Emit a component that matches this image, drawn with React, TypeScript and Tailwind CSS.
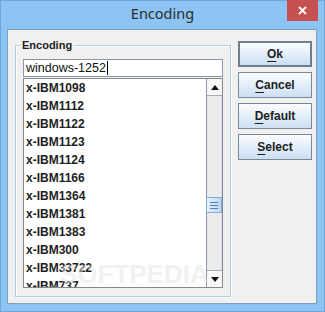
import React from 'react';

const items = [
  'x-IBM1098',
  'x-IBM1112',
  'x-IBM1122',
  'x-IBM1123',
  'x-IBM1124',
  'x-IBM1166',
  'x-IBM1364',
  'x-IBM1381',
  'x-IBM1383',
  'x-IBM300',
  'x-IBM33722',
  'x-IBM737',
];

const buttons = [
  { key: 'O', rest: 'k', def: true },
  { key: 'C', rest: 'ancel' },
  { key: 'D', rest: 'efault' },
  { key: 'S', rest: 'elect' },
];

const Arrow = ({ up }: { up?: boolean }) => (
  <svg width="8" height="5" viewBox="0 0 8 5">
    {up ? <path d="M0 5 L4 0 L8 5 Z" fill="#111" /> : <path d="M0 0 L8 0 L4 5 Z" fill="#111" />}
  </svg>
);

const App = () => {
  return (
    <div className="w-[325px] h-[312px] bg-[#8cc4f4] border border-[#6ea6dc] flex flex-col font-['Liberation_Sans',Arial,sans-serif]">
      {/* title bar */}
      <div className="relative h-[28px] flex items-center justify-center">
        <span className="font-['Noto_Sans',sans-serif] text-[14.5px] text-[#2b2b2b] -mt-[2px]">Encoding</span>
        <div className="absolute right-[6px] -top-px w-[31px] h-[21px] bg-[#c75050] flex items-center justify-center">
          <svg width="9" height="9" viewBox="0 0 9 9">
            <path d="M1 1 L8 8 M8 1 L1 8" stroke="#fff" strokeWidth="1.8" />
          </svg>
        </div>
      </div>

      {/* client area */}
      <div className="ml-[6px] w-[310px] h-[275px] border border-[#7f9fc0] bg-[#f0f0f0] flex items-start pl-[7px] pt-[11px] gap-[7px]">
        {/* group box */}
        <div className="relative mt-[4px] w-[216px] h-[252px] border border-[#b5cde5] shadow-[inset_1px_1px_0_#fff,1px_1px_0_#fff] pt-[13px] px-[7px]">
          <span className="absolute left-[4px] -top-[8px] bg-[#f0f0f0] px-[2px] text-[11px] leading-[14px] font-bold text-[#1e1e1e]">
            Encoding
          </span>
          {/* text field */}
          <div className="h-[18px] w-[200px] border border-[#8a96a3] bg-white flex items-center pl-[2px]">
            <span className="text-[12.5px] leading-none text-[#111]">windows-1252</span>
            <span className="ml-px w-px h-[14px] bg-black" />
          </div>
          {/* list */}
          <div className="relative mt-[1px] w-[200px] h-[210px] border border-[#828790] bg-white flex overflow-hidden">
            <div className="flex-1 flex flex-col">
              {items.map((it) => (
                <div key={it} className="h-[18px] shrink-0 pl-[2px] flex items-center text-[12px] font-bold text-[#1e1e1e]">
                  {it}
                </div>
              ))}
            </div>
            {/* scrollbar */}
            <div className="w-[16px] h-full border-l border-[#8a96a3] bg-[#ececec] flex flex-col">
              <div className="h-[17px] bg-[#f7f7f7] border-b border-[#a7b0ba] flex items-center justify-center">
                <Arrow up />
              </div>
              <div className="flex-1 flex flex-col border-r border-[#d9dfe6]">
                <div className="h-[101px]" />
                <div className="h-[16px] mx-[-1px] bg-gradient-to-r from-[#e6f0fb] via-[#d4e5f8] to-[#bcd6f3] border border-[#7eaee3] flex flex-col items-center justify-center gap-[2px]">
                  <span className="w-[8px] h-px bg-[#4f7fbc]" />
                  <span className="w-[8px] h-px bg-[#4f7fbc]" />
                  <span className="w-[8px] h-px bg-[#4f7fbc]" />
                </div>
              </div>
              <div className="h-[17px] bg-[#f7f7f7] border-t border-[#a7b0ba] flex items-center justify-center">
                <Arrow />
              </div>
            </div>
            {/* watermark */}
            <div className="absolute left-[36px] top-[180px] text-[26px] leading-[30px] font-bold text-[#e4e4e4]/50 pointer-events-none select-none">
              SOFTPEDIA
            </div>
          </div>
        </div>

        {/* buttons */}
        <div className="flex flex-col gap-[5px]">
          {buttons.map((b) => (
            <div
              key={b.key}
              className={`w-[74px] h-[26px] flex items-center justify-center bg-gradient-to-b from-[#fbfdff] to-[#cddff3] text-[12px] font-bold text-[#1e1e1e] ${
                b.def ? 'border-2 border-[#6f7e8e]' : 'border border-[#77889a]'
              }`}
            >
              <span>
                <span className="underline underline-offset-[3px]">{b.key}</span>
                {b.rest}
              </span>
            </div>
          ))}
        </div>
      </div>
    </div>
  );
};

export default App;
